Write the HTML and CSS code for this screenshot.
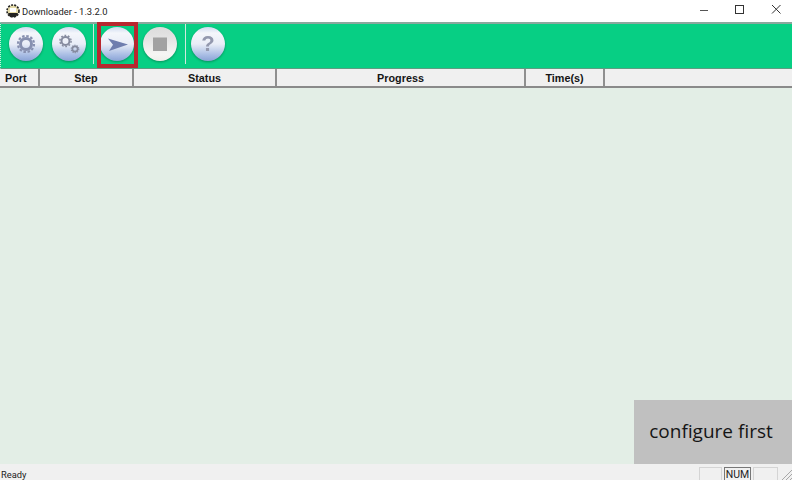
FILE: index.html
```html
<!DOCTYPE html>
<html lang="en">
<head>
<meta charset="utf-8">
<title>Downloader - 1.3.2.0</title>
<link rel="stylesheet" href="styles.css">
</head>
<body>
<svg class="defs" width="0" height="0" aria-hidden="true">
  <defs>
    <linearGradient id="orb" x1="0" y1="0" x2="0" y2="1">
      <stop offset="0" stop-color="#cfdbf0"/>
      <stop offset=".18" stop-color="#f4f6fb"/>
      <stop offset=".5" stop-color="#e9edf7"/>
      <stop offset=".82" stop-color="#a9bde4"/>
      <stop offset="1" stop-color="#8aa3d6"/>
    </linearGradient>
    <linearGradient id="orbGrey" x1="0" y1="0" x2="0" y2="1">
      <stop offset="0" stop-color="#dcdcdc"/>
      <stop offset=".35" stop-color="#e4e4e4"/>
      <stop offset=".8" stop-color="#f6f6f4"/>
      <stop offset="1" stop-color="#eeeeea"/>
    </linearGradient>
  </defs>
</svg>
<div class="window">
  <header class="titlebar">
    <svg class="app-icon" width="16" height="16" viewBox="0 0 16 16">
      <circle cx="8" cy="8" r="6" fill="#e6dca8" stroke="#222" stroke-width="1.600" stroke-dasharray="2 1.200"/>
      <path d="M3 10h10l-2 4H5z" fill="#222"/>
      <path d="M5 5h6v4H5z" fill="#fff"/>
    </svg>
    <span class="title">Downloader - 1.3.2.0</span>
    <div class="controls">
      <svg width="12" height="12" viewBox="0 0 12 12"><path d="M2 7.500h8" stroke="#555" fill="none"/></svg>
      <svg width="12" height="12" viewBox="0 0 12 12"><rect x="1.500" y="2.500" width="8" height="8" stroke="#333" fill="none"/></svg>
      <svg width="12" height="12" viewBox="0 0 12 12"><path d="M2 2l8.500 8.500M10.500 2L2 10.500" stroke="#333" fill="none"/></svg>
    </div>
  </header>
  <nav class="toolbar">
    <div class="group">
      <svg class="orb" viewBox="0 0 36 36">
        <circle cx="18" cy="18" r="17" fill="url(#orb)"/>
        <g fill="none" stroke="#8790b0">
          <circle cx="18" cy="18" r="5.500" stroke-width="3"/>
          <circle cx="18" cy="18" r="8" stroke-width="2.200" stroke-dasharray="2.500 1.690"/>
        </g>
      </svg>
      <svg class="orb" viewBox="0 0 36 36">
        <circle cx="18" cy="18" r="17" fill="url(#orb)"/>
        <g fill="none" stroke="#858a9e">
          <circle cx="14.500" cy="15" r="4" stroke-width="2"/>
          <circle cx="14.500" cy="15" r="5.600" stroke-width="1.400" stroke-dasharray="1.800 1.720"/>
          <circle cx="24" cy="23" r="2.600" stroke-width="1.600"/>
          <circle cx="24" cy="23" r="3.800" stroke-width="1.100" stroke-dasharray="1.300 1.090"/>
        </g>
      </svg>
    </div>
    <i class="sep sep-a"></i>
    <div class="group">
      <svg class="orb" viewBox="0 0 36 36">
        <circle cx="18" cy="18" r="17" fill="url(#orb)"/>
        <path d="M9 12.500L29 18.500 10 25 14 18.700z" fill="#6f7dae"/>
      </svg>
      <svg class="orb" viewBox="0 0 36 36">
        <circle cx="18" cy="18" r="17" fill="url(#orbGrey)"/>
        <rect x="11" y="11.500" width="14" height="13.500" fill="#a2a2a2"/>
      </svg>
    </div>
    <i class="sep sep-b"></i>
    <svg class="orb" viewBox="0 0 36 36">
      <circle cx="18" cy="18" r="17" fill="url(#orb)"/>
      <text class="help" x="18" y="25" text-anchor="middle">?</text>
    </svg>
    <div class="highlight"></div>
  </nav>
  <div class="columns">
    <div class="col col-port">Port</div>
    <div class="col col-step">Step</div>
    <div class="col col-status">Status</div>
    <div class="col col-progress">Progress</div>
    <div class="col col-time">Time(s)</div>
    <div class="col col-rest"></div>
  </div>
  <main class="list">
    <div class="notice">configure first</div>
  </main>
  <footer class="statusbar">
    <span class="ready">Ready</span>
    <span class="pane pane-a"></span>
    <span class="pane pane-num">NUM</span>
    <span class="pane pane-c"></span>
    <svg class="grip" width="12" height="12" viewBox="0 0 12 12">
      <path d="M12 2L2 12M12 6L6 12M12 10L10 12" stroke="#a8a8a8" fill="none"/>
    </svg>
  </footer>
</div>
</body>
</html>
```
FILE: styles.css
```css
* { box-sizing: border-box; }
html, body { margin: 0; padding: 0; }
body { width: 792px; height: 480px; overflow: hidden; background: #fff; font-family: "Liberation Sans", Arial, sans-serif; }
.defs { position: absolute; }
.window { display: flex; flex-direction: column; width: 792px; height: 480px; }

.titlebar { display: flex; align-items: center; height: 22px; padding-left: 5px; background: #fff; flex: none; }
.app-icon { flex: none; }
.title { margin-left: 1px; font-size: 9.400px; color: #222; font-family: Roboto, sans-serif; }
.controls { display: flex; gap: 24px; margin-left: auto; margin-bottom: 4px; padding-right: 10px; align-items: center; }

.toolbar { position: relative; display: flex; align-items: center; height: 47px; flex: none; padding: 0 0 4px 7px; background: #07cf84; border-top: 2px solid #8ba89e; border-bottom: 1px solid #5f9c82; border-left: 1px dotted #cfeede; }
.group { display: flex; gap: 7px; flex: none; }
.orb { width: 36px; height: 36px; flex: none; filter: drop-shadow(0 1px 1px rgba(0,70,40,.45)); }
.sep { width: 1px; height: 40px; flex: none; background: #cfe9dd; }
.sep-a { margin: 0 5px 0 6px; }
.sep-b { margin: 0 4px 0 7px; }
.help { font: bold 22px "Liberation Sans", sans-serif; fill: #9398ae; }
.highlight { position: absolute; left: 96px; top: -2px; width: 41px; height: 46px; border: 4px solid #b8272f; }

.columns { display: flex; height: 19px; flex: none; background: #f0f0f0; border-bottom: 2px solid #8a8a8a; font-size: 10.800px; font-weight: bold; color: #151515; }
.col { display: flex; align-items: center; justify-content: center; border-right: 2px solid #8f8f8f; }
.col-port { width: 40px; justify-content: flex-start; padding-left: 5px; }
.col-step { width: 94px; }
.col-status { width: 143px; }
.col-progress { width: 249px; }
.col-time { width: 79px; }
.col-rest { flex: 1; border-right: 0; }

.list { position: relative; flex: 1; background: #e3eee6; }
.notice { position: absolute; right: 0; bottom: 0; width: 158px; height: 64px; display: flex; align-items: center; justify-content: center; padding: 0 4px 2px 0; background: #c0c0c0; color: #151515; font: 19px "Open Sans", sans-serif; }

.statusbar { display: flex; align-items: flex-end; height: 16px; flex: none; background: #f0f0f0; font-size: 9.300px; color: #222; font-family: Roboto, sans-serif; position: relative; padding-right: 14px; gap: 2px; }
.ready { margin-right: auto; padding-left: 1px; line-height: 11px; }
.pane { height: 13px; border: 1px solid #d4d4d4; border-bottom: 0; line-height: 13px; text-align: center; }
.pane-a { width: 23px; }
.pane-num { width: 27px; border-color: #777; font-size: 10.500px; }
.pane-c { width: 25px; }
.grip { position: absolute; right: 0; bottom: 0; }
```
